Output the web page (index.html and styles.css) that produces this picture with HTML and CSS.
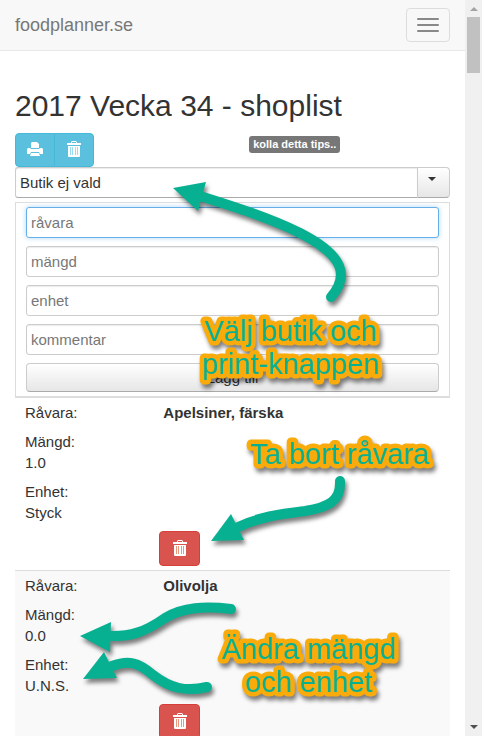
FILE: index.html
```html
<!DOCTYPE html>
<html lang="sv">
<head>
    <meta charset="UTF-8">
    <meta name="viewport" content="width=device-width, initial-scale=1.0">
    <title>foodplanner.se</title>
    <link rel="stylesheet" href="styles.css">
</head>
<body>
    <!-- Shared icons -->
    <svg class="sprite" aria-hidden="true">
        <symbol id="icon-trash" viewBox="0 0 14 16">
            <path d="M4 3V1.500Q4 0 5.500 0h3Q10 0 10 1.500V3H9V1H5v2zM0 2h14v2H0zM1 5h12v10a1 1 0 0 1-1 1H2a1 1 0 0 1-1-1z"/>
            <path class="ribs" d="M3.500 6v8M5.500 6v8M8.500 6v8M10.500 6v8"/>
        </symbol>
        <symbol id="icon-print" viewBox="0 0 16 16">
            <path d="M5 1h5l2 2v4H4V2zM1 7h2l1 1h8l1-1h2l1 1v5h-3l-1-2H4l-1 2H0V8zM4 12h8l1 3H3z"/>
        </symbol>
    </svg>

    <div class="page">
        <nav class="navbar">
            <a class="brand" href="#">foodplanner.se</a>
            <button class="toggle" type="button" aria-label="Meny">
                <span class="bar"></span>
                <span class="bar"></span>
                <span class="bar"></span>
            </button>
        </nav>

        <main class="container">
            <h1>2017 Vecka 34 - shoplist</h1>

            <div class="toolbar">
                <div class="btn-group">
                    <button class="btn btn-info" type="button" aria-label="Skriv ut"><svg class="icon print"><use href="#icon-print"/></svg></button>
                    <button class="btn btn-info" type="button" aria-label="Rensa"><svg class="icon"><use href="#icon-trash"/></svg></button>
                </div>
                <a class="tip" href="#">kolla detta tips..</a>
            </div>

            <!-- Store picker -->
            <div class="combobox">
                <input class="field" type="text" aria-label="Butik" value="Butik ej vald">
                <button class="drop" type="button" aria-label="Visa butiker"><span class="caret"></span></button>
            </div>

            <!-- Add a new item -->
            <form class="add-form">
                <input class="field active" type="text" aria-label="råvara" placeholder="råvara">
                <input class="field" type="text" aria-label="mängd" placeholder="mängd">
                <input class="field" type="text" aria-label="enhet" placeholder="enhet">
                <input class="field" type="text" aria-label="kommentar" placeholder="kommentar">
                <button class="submit" type="button">Lägg till</button>
            </form>

            <table class="items">
                <tbody>
                    <tr>
                        <td class="pair"><span>Råvara:</span><b>Apelsiner, färska</b></td>
                        <td><div>Mängd:</div><div>1.0</div></td>
                        <td><div>Enhet:</div><div>Styck</div></td>
                        <td class="pair"><span></span><button class="btn btn-danger" type="button" aria-label="Ta bort"><svg class="icon"><use href="#icon-trash"/></svg></button></td>
                    </tr>
                    <tr>
                        <td class="pair"><span>Råvara:</span><b>Olivolja</b></td>
                        <td><div>Mängd:</div><div>0.0</div></td>
                        <td><div>Enhet:</div><div>U.N.S.</div></td>
                        <td class="pair"><span></span><button class="btn btn-danger" type="button" aria-label="Ta bort"><svg class="icon"><use href="#icon-trash"/></svg></button></td>
                    </tr>
                </tbody>
            </table>
        </main>

        <!-- Help arrows and notes on top of the page -->
        <svg class="guide" width="465" height="736" viewBox="0 0 465 736">
            <g class="arrows">
                <path class="line" d="M331 297C350 275 343 255 300 233C270 218 235 207 200 196"/>
                <path class="head" d="M173 188L206 182L198 211z"/>
                <path class="line" d="M340 481C341 500 330 507 305 511C280 514 258 517 236 528"/>
                <path class="head" d="M211 541L231 514L244 540z"/>
                <path class="line" d="M231 609C205 606 183 607 165 618C145 632 130 637 108 636"/>
                <path class="head" d="M80 636L111 622L110 652z"/>
                <path class="line" d="M207 687C185 692 170 688 153 675C138 662 128 660 112 666"/>
                <path class="head" d="M83 679L104 652L117 678z"/>
            </g>
            <g class="notes">
                <text x="291" y="341">Välj butik och</text>
                <text x="291" y="374">print-knappen</text>
                <text x="340" y="464">Ta bort råvara</text>
                <text x="309" y="659">Ändra mängd</text>
                <text x="309" y="692">och enhet</text>
            </g>
        </svg>
    </div>

    <div class="scrollbar" aria-hidden="true">
        <span class="arrow up"></span>
        <span class="thumb"></span>
        <span class="arrow down"></span>
    </div>
</body>
</html>
```

FILE: styles.css
```css
* {
    box-sizing: border-box;
}
body {
    display: flex;
    height: 100vh;
    margin: 0;
    overflow: hidden;
    background: #fff;
    color: #333;
    font-family: "Liberation Sans", Arial, sans-serif;
    font-size: 15px;
    line-height: 21px;
}
input, button {
    font: inherit;
    color: inherit;
}
button {
    cursor: pointer;
}
.sprite {
    position: absolute;
    width: 0;
    height: 0;
}
.page {
    position: relative;
    flex: 1;
    min-width: 0;
    height: 100vh;
    overflow: hidden;
}

/* Navbar */
.navbar {
    display: flex;
    align-items: center;
    justify-content: space-between;
    height: 51px;
    padding: 0 15px;
    background: #f8f8f8;
    border-bottom: 1px solid #e7e7e7;
}
.brand {
    color: #777;
    font-size: 18px;
    text-decoration: none;
}
.toggle {
    display: flex;
    flex-direction: column;
    justify-content: center;
    gap: 4px;
    height: 34px;
    padding: 0 10px;
    background: transparent;
    border: 1px solid #ddd;
    border-radius: 4px;
}
.bar {
    width: 22px;
    height: 2px;
    border-radius: 1px;
    background: #888;
}

.container {
    padding: 38px 15px 0;
}
h1 {
    margin: 0 0 10px;
    font-size: 30px;
    font-weight: normal;
    line-height: 34px;
}

/* Buttons */
.toolbar {
    display: grid;
    grid-template-columns: 7fr 6fr;
    align-items: start;
}
.btn-group {
    display: flex;
}
.btn {
    display: flex;
    align-items: center;
    justify-content: center;
    width: 40px;
    height: 34px;
    padding: 0 0 2px;
    border-radius: 4px;
    color: #fff;
}
.btn-info {
    background: #5bc0de;
    border: 1px solid #46b8da;
}
.btn-info:first-child {
    border-radius: 4px 0 0 4px;
}
.btn-info:last-child {
    margin-left: -1px;
    border-radius: 0 4px 4px 0;
}
.btn-danger {
    width: 41px;
    height: 35px;
    margin-left: -4px;
    background: #d9534f;
    border: 1px solid #d43f3a;
}
.icon {
    width: 14px;
    height: 16px;
    fill: currentColor;
}
.icon.print {
    width: 16px;
}
.ribs {
    stroke: #e0a9b8;
    stroke-width: 1px;
}
.btn-info .icon {
    --rib: #9adcf0;
}
.btn-danger .icon {
    --rib: #e79a80;
}
.ribs {
    stroke: var(--rib);
}
.tip {
    justify-self: start;
    margin-top: 3px;
    padding: 0 4px;
    border-radius: 3px;
    background: #777;
    color: #fff;
    font-size: 11px;
    font-weight: bold;
    line-height: 17px;
    text-decoration: none;
}

/* Fields */
.field {
    width: 100%;
    height: 31px;
    padding: 0 4px;
    background: #fff;
    border: 1px solid #ccc;
    border-radius: 3px;
    box-shadow: inset 0 1px 1px rgba(0, 0, 0, 0.08);
}
.field::placeholder {
    color: #777;
}
.field.active {
    border-color: #66afe9;
    box-shadow: 0 0 5px rgba(102, 175, 233, 0.5);
}
.combobox {
    display: flex;
}
.combobox .field {
    flex: 1;
    min-width: 0;
    border-color: #ccc #ccc #aaa;
    border-right: 0;
    border-radius: 3px 0 0 3px;
}
.drop {
    display: flex;
    justify-content: center;
    width: 33px;
    padding: 9px 3px 0 0;
    border: 1px solid #ccc;
    border-bottom-color: #aaa;
    border-radius: 0 4px 4px 0;
    background: linear-gradient(#fff, #e6e6e6);
}
.caret {
    height: 0;
    border-top: 4px solid #333;
    border-left: 4px solid transparent;
    border-right: 4px solid transparent;
}
.add-form {
    display: flex;
    flex-direction: column;
    gap: 8px;
    margin-top: 4px;
    padding: 4px 10px;
    border: 1px solid #ddd;
    border-bottom-width: 2px;
}
.submit {
    height: 29px;
    padding: 0;
    border: 1px solid #ccc;
    border-bottom-color: #aaa;
    border-radius: 4px;
    background: linear-gradient(#fff, #e6e6e6);
}

.items, .items tbody, .items tr {
    display: block;
}
.items td {
    display: block;
    padding: 4px 10px;
}
.items tr + tr {
    background: #f9f9f9;
    border-top: 1px solid #ddd;
}
.items .pair {
    display: grid;
    grid-template-columns: 1fr 2fr;
}

/* Guide */
.guide {
    position: absolute;
    top: 0;
    left: 0;
    pointer-events: none;
}
.arrows, .notes {
    filter: drop-shadow(2px 4px 2px rgba(0, 0, 0, 0.5));
}
.line {
    fill: none;
    stroke: #08b092;
    stroke-width: 10px;
    stroke-linecap: round;
}
.head {
    fill: #08b092;
}
.notes text {
    fill: #08b092;
    stroke: #f9ab0c;
    stroke-width: 9px;
    stroke-linejoin: round;
    paint-order: stroke;
    font-size: 29px;
    text-anchor: middle;
}

/* Scrollbar */
.scrollbar {
    display: flex;
    flex-direction: column;
    align-items: center;
    width: 17px;
    padding: 7px 0;
    background: #f0f0f0;
}
.thumb {
    width: 13px;
    height: 56px;
    margin-top: 6px;
    background: #c1c1c1;
}
.arrow {
    border-left: 4px solid transparent;
    border-right: 4px solid transparent;
}
.arrow.up {
    border-bottom: 4px solid #a3a3a3;
}
.arrow.down {
    margin-top: auto;
    border-top: 4px solid #505050;
}
```
